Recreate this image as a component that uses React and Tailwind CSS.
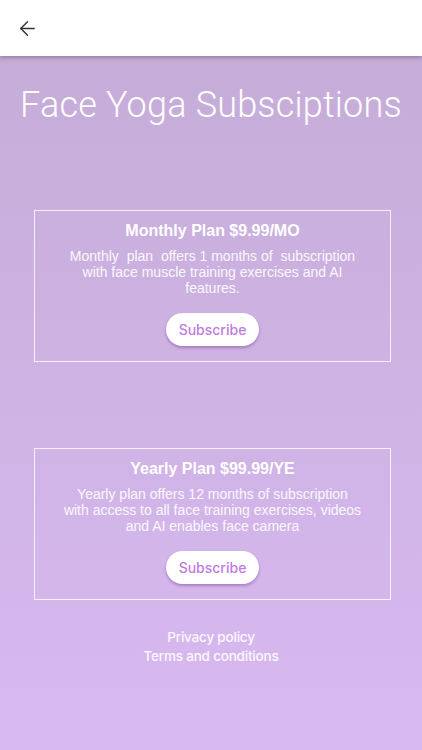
import React from 'react';
import { ArrowLeft } from 'lucide-react';

const plans = [
  {
    title: 'Monthly Plan $9.99/MO',
    lines: [
      'Monthly  plan  offers 1 months of  subscription',
      'with face muscle training exercises and AI',
      'features.',
    ],
  },
  {
    title: 'Yearly Plan $99.99/YE',
    lines: [
      'Yearly plan offers 12 months of subscription',
      'with access to all face training exercises, videos',
      'and AI enables face camera',
    ],
  },
];

const PlanCard = ({ plan }) => (
  <div className="ml-[34px] mr-[31px] border-[1.5px] border-white/80 pt-[10px] pb-[15px] flex flex-col items-center">
    <h2 className="text-[16px] leading-[20px] font-bold text-white">{plan.title}</h2>
    <div className="mt-[7px] text-[14px] leading-[16px] text-white/90 text-center whitespace-pre">
      {plan.lines.map((l, i) => (
        <div key={i}>{l}</div>
      ))}
    </div>
    <button className="mt-[17px] w-[93px] h-[33px] rounded-full bg-white text-[14px] font-medium text-[#c07be0] font-['Inter',sans-serif] shadow-[0_2px_3px_rgba(120,60,150,0.45)]">
      Subscribe
    </button>
  </div>
);

export default function App() {
  return (
    <div className="w-[422px] h-[750px] flex flex-col bg-gradient-to-b from-[#c4acd6] to-[#d8b9f1] font-['Liberation_Sans',Arial,sans-serif] overflow-hidden">
      <header className="h-[56px] bg-white flex items-center pl-[16px] shadow-[0_2px_4px_rgba(0,0,0,0.25)] relative z-10">
        <ArrowLeft size={23} strokeWidth={1.5} className="text-[#333]" />
      </header>
      <h1 className="mt-[29px] text-center text-[36px] leading-[40px] font-light text-white tracking-[0.2px] font-['Roboto',sans-serif]">
        Face Yoga Subsciptions
      </h1>
      <div className="mt-[85px]">
        <PlanCard plan={plans[0]} />
      </div>
      <div className="mt-[86px]">
        <PlanCard plan={plans[1]} />
      </div>
      <div className="mt-[28px] flex flex-col items-center text-[13.5px] leading-[19px] text-white/90 font-medium font-['Inter',sans-serif] tracking-[-0.2px]">
        <span>Privacy policy</span>
        <span>Terms and conditions</span>
      </div>
    </div>
  );
}
